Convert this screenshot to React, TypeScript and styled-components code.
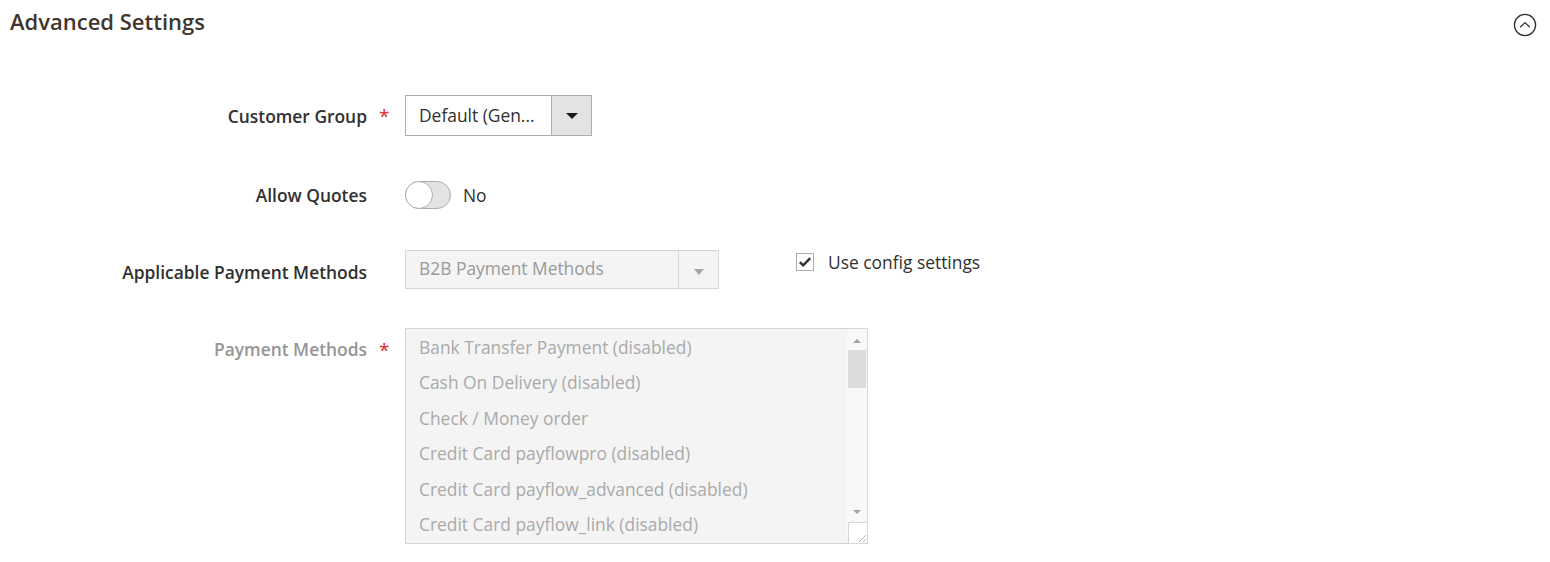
import React from "react";
import styled, { createGlobalStyle } from "styled-components";

const Global = createGlobalStyle`
  html, body { margin: 0; padding: 0; background: #ffffff; }
  body { font-family: "Open Sans", "Liberation Sans", sans-serif; color: #303030; }
  * { box-sizing: border-box; }
`;

const Page = styled.div`
  width: 1550px;
  height: 562px;
  background: #fff;
`;

const Header = styled.div`
  display: flex;
  align-items: center;
  justify-content: space-between;
  height: 44px;
  padding: 0 13px 0 10px;
`;

const Title = styled.h2`
  margin: 0;
  margin-top: -2px;
  font-size: 22px;
  font-weight: 600;
  color: #41362f;
  line-height: 30px;
`;

const CollapseButton = styled.button`
  border: 0;
  background: transparent;
  padding: 0;
  width: 24px;
  height: 24px;
  margin-top: 6px;
  display: flex;
  align-items: center;
  justify-content: center;
`;

const Form = styled.div`
  display: flex;
  flex-direction: column;
  padding-top: 51px;
`;

const Row = styled.div<{ $align?: string; $mb: number }>`
  display: flex;
  align-items: ${(p) => p.$align || "center"};
  margin-bottom: ${(p) => p.$mb}px;
`;

const Label = styled.div<{ $disabled?: boolean; $pt?: number }>`
  width: 367px;
  text-align: right;
  font-size: 17.4px;
  font-weight: 600;
  line-height: 22px;
  color: ${(p) => (p.$disabled ? "#959595" : "#303030")};
  padding-top: ${(p) => p.$pt || 0}px;
`;

const Required = styled.div<{ $pt?: number }>`
  width: 38px;
  padding-left: 12px;
  color: #e22626;
  font-size: 19px;
  line-height: 22px;
  padding-top: ${(p) => p.$pt || 0}px;
`;

const Select = styled.div<{ $width: number; $disabled?: boolean }>`
  display: flex;
  width: ${(p) => p.$width}px;
  height: ${(p) => (p.$disabled ? 39 : 41)}px;
  border: 1px solid ${(p) => (p.$disabled ? "#d6d6d6" : "#adadad")};
  background: ${(p) => (p.$disabled ? "#f4f4f4" : "#fff")};
`;

const SelectValue = styled.div<{ $disabled?: boolean }>`
  flex: 1;
  padding-left: 13px;
  font-size: 17.4px;
  line-height: ${(p) => (p.$disabled ? "35px" : "39px")};
  color: ${(p) => (p.$disabled ? "#9a9a9a" : "#303030")};
  white-space: nowrap;
  overflow: hidden;
`;

const SelectButton = styled.div<{ $disabled?: boolean }>`
  width: 40px;
  display: flex;
  align-items: center;
  justify-content: center;
  background: ${(p) => (p.$disabled ? "#f4f4f4" : "#e3e3e3")};
  border-left: 1px solid ${(p) => (p.$disabled ? "#d6d6d6" : "#adadad")};
`;

const Caret = styled.span<{ $disabled?: boolean }>`
  width: 0;
  height: 0;
  border-left: ${(p) => (p.$disabled ? 5 : 6)}px solid transparent;
  border-right: ${(p) => (p.$disabled ? 5 : 6)}px solid transparent;
  border-top: 6px solid ${(p) => (p.$disabled ? "#a6a6a6" : "#1a1a1a")};
  margin-top: ${(p) => (p.$disabled ? 4 : 1)}px;
`;

const Toggle = styled.div`
  display: flex;
  align-items: center;
  gap: 12px;
`;

const Track = styled.div`
  width: 46px;
  height: 28px;
  border-radius: 14px;
  border: 1px solid #adadad;
  background: #e3e3e3;
  display: flex;
  align-items: center;
`;

const Knob = styled.div`
  width: 28px;
  height: 28px;
  margin-left: -1px;
  border-radius: 50%;
  border: 1px solid #adadad;
  background: #fff;
`;

const ToggleText = styled.span`
  font-size: 17.4px;
  line-height: 22px;
  color: #303030;
`;

const UseDefault = styled.label`
  display: flex;
  align-items: center;
  gap: 14px;
  margin-left: 77px;
  margin-top: 1px;
  font-size: 17.4px;
  line-height: 22px;
  color: #303030;
`;

const CheckBox = styled.span`
  width: 18px;
  height: 18px;
  border: 1px solid #adadad;
  background: #fff;
  display: flex;
  align-items: center;
  justify-content: center;
`;

const ListBox = styled.div`
  display: flex;
  width: 463px;
  height: 216px;
  border: 1px solid #d6d6d6;
  background: #f4f4f4;
`;

const Options = styled.div`
  flex: 1;
  padding-left: 13px;
  padding-top: 1px;
  overflow: hidden;
`;

const Option = styled.div`
  font-size: 17.4px;
  height: 35.4px;
  line-height: 35.4px;
  color: #aaaaaa;
  white-space: nowrap;
`;

const ScrollBar = styled.div`
  width: 20px;
  display: flex;
  flex-direction: column;
  align-items: center;
  background: #f8f8f8;
`;

const ArrowUp = styled.span`
  width: 0;
  height: 0;
  border-left: 4px solid transparent;
  border-right: 4px solid transparent;
  border-bottom: 4px solid #a3a3a3;
  margin-top: 10px;
`;

const ArrowDown = styled.span`
  width: 0;
  height: 0;
  border-left: 4px solid transparent;
  border-right: 4px solid transparent;
  border-top: 4px solid #a3a3a3;
  margin-bottom: 8px;
`;

const Thumb = styled.div`
  width: 18px;
  height: 38px;
  margin-top: 7px;
  background: #dcdcdc;
`;

const Spacer = styled.div`
  flex: 1;
`;

const Resizer = styled.div`
  width: 20px;
  height: 22px;
  margin-right: -1px;
  margin-bottom: -1px;
  background: #fff;
  border: 1px solid #d6d6d6;
  display: flex;
  align-items: flex-end;
  justify-content: flex-end;
`;

const payments = [
  "Bank Transfer Payment (disabled)",
  "Cash On Delivery (disabled)",
  "Check / Money order",
  "Credit Card payflowpro (disabled)",
  "Credit Card payflow_advanced (disabled)",
  "Credit Card payflow_link (disabled)",
];

export default function App() {
  return (
    <Page>
      <Global />
      <Header>
        <Title>Advanced Settings</Title>
        <CollapseButton aria-label="Collapse">
          <svg width="24" height="24" viewBox="0 0 24 24" fill="none">
            <circle cx="12" cy="12" r="10.6" stroke="#303030" strokeWidth="1.3" />
            <path d="M7.6 13.8 L12 9.6 L16.4 13.8" stroke="#303030" strokeWidth="1.3" strokeLinecap="round" strokeLinejoin="round" />
          </svg>
        </CollapseButton>
      </Header>
      <Form>
        <Row $mb={45}>
          <Label>Customer Group</Label>
          <Required>*</Required>
          <Select $width={187}>
            <SelectValue>Default (Gen...</SelectValue>
            <SelectButton>
              <Caret />
            </SelectButton>
          </Select>
        </Row>
        <Row $mb={41}>
          <Label>Allow Quotes</Label>
          <Required />
          <Toggle>
            <Track>
              <Knob />
            </Track>
            <ToggleText>No</ToggleText>
          </Toggle>
        </Row>
        <Row $align="flex-start" $mb={39}>
          <Label $pt={11}>Applicable Payment Methods</Label>
          <Required />
          <Select $width={314} $disabled>
            <SelectValue $disabled>B2B Payment Methods</SelectValue>
            <SelectButton $disabled>
              <Caret $disabled />
            </SelectButton>
          </Select>
          <UseDefault>
            <CheckBox>
              <svg width="14" height="12" viewBox="0 0 14 12">
                <path d="M1.8 6.2 L5.2 9.4 L12.2 2.2" stroke="#303030" strokeWidth="2.4" fill="none" />
              </svg>
            </CheckBox>
            Use config settings
          </UseDefault>
        </Row>
        <Row $align="flex-start" $mb={0}>
          <Label $disabled $pt={10}>Payment Methods</Label>
          <Required $pt={11}>*</Required>
          <ListBox>
            <Options>
              {payments.map((p) => (
                <Option key={p}>{p}</Option>
              ))}
            </Options>
            <ScrollBar>
              <ArrowUp />
              <Thumb />
              <Spacer />
              <ArrowDown />
              <Resizer>
                <svg width="10" height="10" viewBox="0 0 10 10">
                  <path d="M9 2 L2 9 M9 6 L6 9" stroke="#b5b5b5" strokeWidth="1" />
                </svg>
              </Resizer>
            </ScrollBar>
          </ListBox>
        </Row>
      </Form>
    </Page>
  );
}
